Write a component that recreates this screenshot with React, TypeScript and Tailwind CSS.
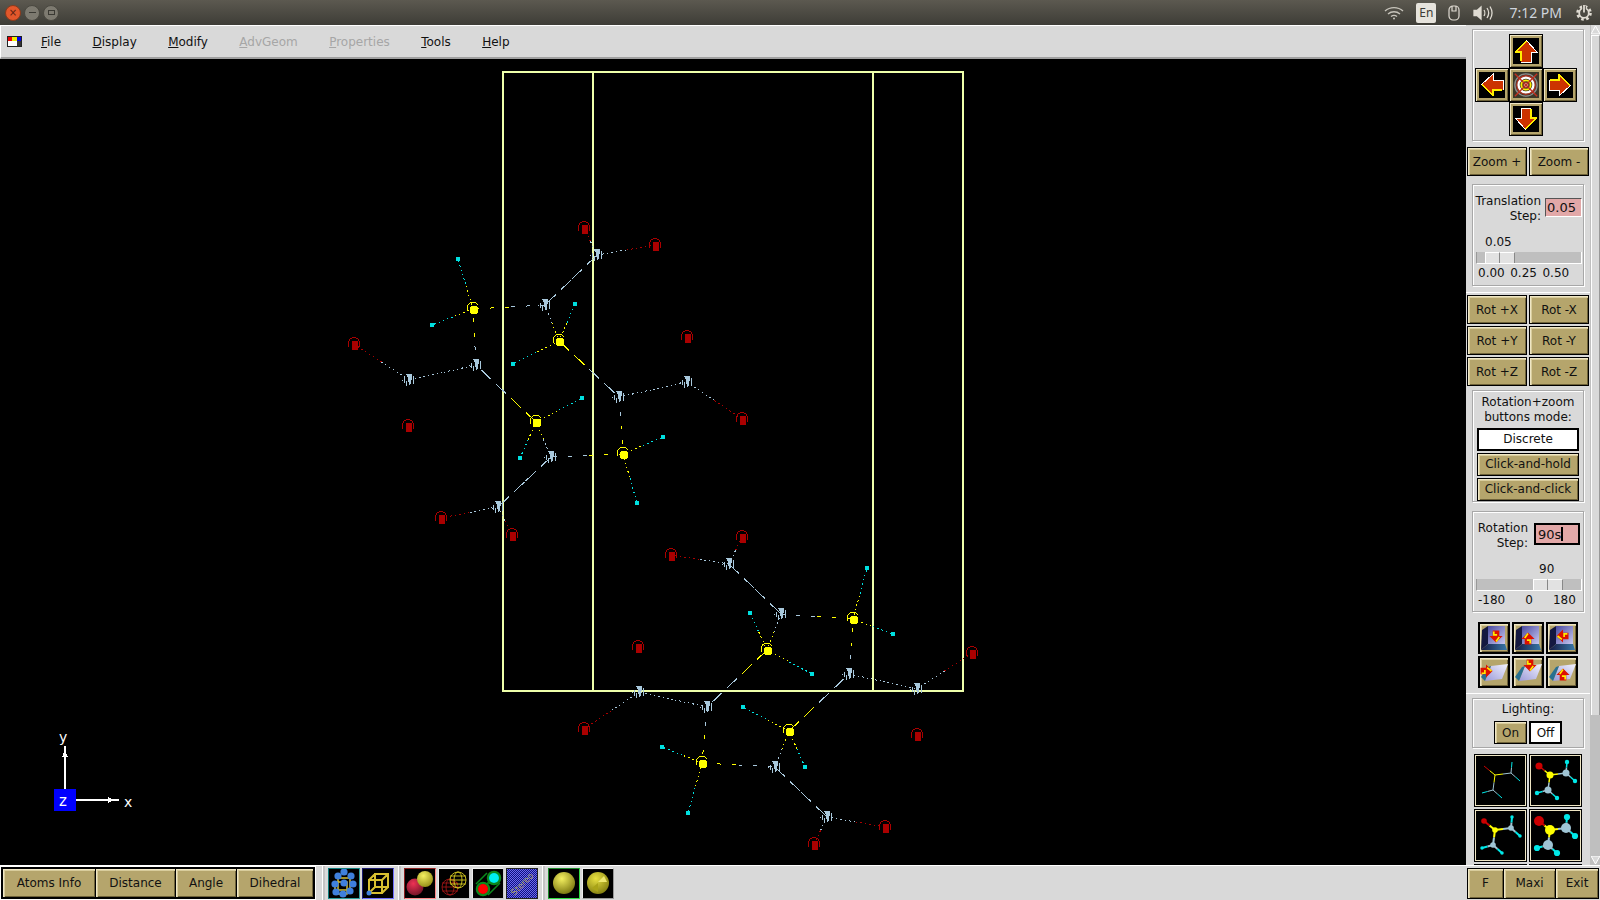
const btn = "flex items-center justify-center bg-[#b5a56c] border border-black shadow-[inset_1px_1px_0_#efe6c4,inset_2px_2px_0_#d8cc9c,inset_-1px_-1px_0_#6e6239] text-[#111]"
const frame = "mx-[6px] w-[112px] border border-[#a8a8a8] shadow-[1px_1px_0_#fff,inset_1px_1px_0_#fff]"

type Kind = "N" | "S" | "O" | "H"
const colors: Record<Kind, string> = { N: "#a8c8dc", S: "#ffff00", O: "#aa0000", H: "#00e0e0" }

const atoms: Record<string, [Kind, number, number]> = {
  a1: ["N", 597, 255], a2: ["N", 545, 305], a3: ["N", 476, 365], a4: ["N", 409, 380],
  a5: ["N", 619, 397], a6: ["N", 687, 382], a7: ["N", 551, 457], a8: ["N", 498, 507],
  s1: ["S", 473, 309], s2: ["S", 559, 341], s3: ["S", 536, 422], s4: ["S", 623, 454],
  h1: ["H", 458, 259], h2: ["H", 432, 325], h3: ["H", 575, 304], h4: ["H", 513, 364],
  h5: ["H", 582, 398], h6: ["H", 520, 458], h7: ["H", 663, 437], h8: ["H", 637, 503],
  o1: ["O", 584, 228], o2: ["O", 655, 245], o3: ["O", 687, 337], o4: ["O", 354, 344],
  o5: ["O", 408, 426], o6: ["O", 742, 419], o7: ["O", 441, 518], o8: ["O", 512, 535],
  b1: ["N", 729, 564], b2: ["N", 781, 614], b3: ["N", 849, 674], b4: ["N", 917, 689],
  b5: ["N", 639, 692], b6: ["N", 707, 707], b7: ["N", 775, 767], b8: ["N", 827, 817],
  t1: ["S", 853, 619], t2: ["S", 767, 650], t3: ["S", 789, 731], t4: ["S", 702, 763],
  k1: ["H", 867, 568], k2: ["H", 893, 634], k3: ["H", 750, 613], k4: ["H", 812, 674],
  k5: ["H", 743, 707], k6: ["H", 805, 767], k7: ["H", 662, 747], k8: ["H", 688, 813],
  p1: ["O", 742, 537], p2: ["O", 671, 555], p3: ["O", 638, 647], p4: ["O", 972, 653],
  p5: ["O", 917, 735], p6: ["O", 584, 729], p7: ["O", 885, 827], p8: ["O", 814, 844],
}

const bonds = [
  "o1-a1", "o2-a1", "a1-a2", "a2-s1", "a2-s2", "s2-h3", "s2-h4", "s2-a5", "a5-s4", "a5-a6", "a6-o6",
  "s4-h7", "s4-h8", "s4-a7", "a7-s3", "s3-h5", "s3-h6", "s3-a3", "a3-s1", "s1-h1", "s1-h2", "a3-a4",
  "a4-o4", "a7-a8", "a8-o7", "a8-o8",
  "p1-b1", "p2-b1", "b1-b2", "b2-t1", "b2-t2", "t2-k3", "t2-k4", "t2-b6", "b6-b5", "b5-p6", "b6-t4",
  "t4-k7", "t4-k8", "t4-b7", "b7-t3", "t3-k5", "t3-k6", "t3-b3", "b3-t1", "t1-k1", "t1-k2", "b3-b4",
  "b4-p4", "b7-b8", "b8-p7", "b8-p8",
]

// aliased GL lines break up differently depending on their slope
function dashFor(dx: number, dy: number) {
  const r = Math.min(Math.abs(dx), Math.abs(dy)) / Math.max(Math.abs(dx), Math.abs(dy))
  if (r < 0.1) return "4 11"
  if (r > 0.85) return "14 7"
  return "1.5 3"
}

function Atom({ kind, x, y }: { kind: Kind; x: number; y: number }) {
  const c = colors[kind]
  if (kind === "H") return <rect x={x - 2} y={y - 2} width={4} height={4} fill={c} />
  if (kind === "O")
    return (
      <g>
        <path d={`M${x - 5.5} ${y + 3}V${y - 1}A5.5 5.5 0 0 1 ${x + 5.5} ${y - 1}V${y + 3}`} fill="none" stroke={c} />
        <rect x={x - 2.5} y={y - 3} width={6} height={9} fill={c} />
      </g>
    )
  if (kind === "S")
    return (
      <g>
        <path d={`M${x - 6} ${y + 2}V${y - 1}A6 6 0 0 1 ${x + 5} ${y - 4}`} fill="none" stroke={c} />
        <circle cx={x + 1} cy={y + 1} r={4.5} fill={c} />
      </g>
    )
  return (
    <g fill={c}>
      <polygon points={`${x - 3},${y - 6} ${x + 3},${y - 6} ${x + 2},${y + 4} ${x},${y + 5} ${x - 1},${y - 2}`} />
      <rect x={x + 4} y={y - 4} width={1} height={8} />
      <rect x={x - 5} y={y - 2} width={1} height={5} />
      <rect x={x - 3} y={y + 1} width={1} height={5} />
      <rect x={x - 7} y={y} width={1} height={1} />
    </g>
  )
}

function Scene() {
  return (
    <svg width={1466} height={806} viewBox="0 59 1466 806" shapeRendering="crispEdges" className="block bg-black">
      <g stroke="#eeffaa" strokeWidth={2} fill="none">
        <rect x={503} y={72} width={460} height={619} />
        <path d="M593 72V691M873 72V691" />
      </g>
      {bonds.map(b => {
        const [from, to] = b.split("-")
        const [k1, x1, y1] = atoms[from]
        const [k2, x2, y2] = atoms[to]
        const mx = (x1 + x2) / 2
        const my = (y1 + y2) / 2
        const dash = dashFor(x2 - x1, y2 - y1)
        return (
          <g key={b} strokeDasharray={dash}>
            <line x1={x1} y1={y1} x2={mx} y2={my} stroke={colors[k1]} />
            <line x1={mx} y1={my} x2={x2} y2={y2} stroke={colors[k2]} />
          </g>
        )
      })}
      {Object.entries(atoms).map(([id, [k, x, y]]) => (
        <Atom key={id} kind={k} x={x} y={y} />
      ))}
      {/* axes */}
      <g fill="#fff">
        <rect x={64} y={746} width={2} height={43} />
        <polygon points="65,750 68,757 62,757" />
        <rect x={76} y={799} width={43} height={2} />
        <polygon points="115,800 108,797 108,803" />
        <rect x={54} y={789} width={22} height={22} fill="#0000ff" />
        <text x={59} y={806} fontFamily="'DejaVu Sans', sans-serif" fontSize={15}>z</text>
        <text x={59} y={742} fontFamily="'DejaVu Sans', sans-serif" fontSize={14}>y</text>
        <text x={124} y={807} fontFamily="'DejaVu Sans', sans-serif" fontSize={14}>x</text>
      </g>
    </svg>
  )
}

function Arrow({ rot }: { rot: number }) {
  return (
    <svg width={24} height={24} viewBox="0 0 24 24" style={{ transform: `rotate(${rot}deg)` }} shapeRendering="crispEdges">
      <polygon points="12,1 23,13 17,13 17,23 7,23 7,13 1,13" fill="#cc3300" />
      <path d="M12 2L2 13H7V22" fill="none" stroke="#ffee00" strokeWidth={1.5} />
      <path d="M12 1L23 13H17V23H7" fill="none" stroke="#fff" strokeWidth={1} />
    </svg>
  )
}

function Target() {
  return (
    <svg width={26} height={26} viewBox="0 0 28 28">
      <rect width={28} height={28} fill="#3a3828" />
      <circle cx={14} cy={14} r={12} fill="none" stroke="#8a8a8a" strokeWidth={1.5} />
      <circle cx={14} cy={14} r={10} fill="none" stroke="#b03020" strokeWidth={1.5} />
      <circle cx={14} cy={14} r={8} fill="none" stroke="#fff" strokeWidth={2.5} />
      <circle cx={14} cy={14} r={5} fill="none" stroke="#ffee00" strokeWidth={2} />
      <circle cx={14} cy={14} r={2.5} fill="#fff" stroke="#b03020" />
      <path d="M2 2L26 26M26 2L2 26" stroke="#c03020" strokeWidth={1.5} />
    </svg>
  )
}

function NavButton({ children }: { children: React.ReactNode }) {
  return (
    <div className="w-[34px] h-[34px] bg-[#b5a56c] border border-black shadow-[inset_1px_1px_0_#efe6c4,inset_-1px_-1px_0_#6e6239] p-[3px]">
      <div className="w-full h-full bg-black flex items-center justify-center overflow-hidden">{children}</div>
    </div>
  )
}

function PlaneButton({ arrow, type }: { arrow: [number, number, number]; type: "wall" | "slab" }) {
  const [ax, ay, rot] = arrow
  return (
    <div className={`${btn} w-[32px] h-[32px] border-2 p-0`}>
      <svg width={28} height={28} viewBox="0 0 28 28">
        <defs>
          <linearGradient id="pl" x1="0" y1="0" x2="1" y2="1">
            <stop offset="0" stopColor="#4a4aa0" />
            <stop offset="1" stopColor="#c8c8f0" />
          </linearGradient>
          <linearGradient id="pb" x1="0" y1="1" x2="1" y2="0">
            <stop offset="0" stopColor="#9a9ad8" />
            <stop offset="1" stopColor="#f4f4ff" />
          </linearGradient>
          <linearGradient id="pd" x1="0" y1="0" x2="1" y2="0">
            <stop offset="0" stopColor="#141840" />
            <stop offset="1" stopColor="#3878a8" />
          </linearGradient>
        </defs>
        {type === "wall" ? (
          <g>
            <rect x={8} y={2} width={17} height={18} fill="url(#pl)" />
            <polygon points="2,6 8,2 8,20 1,26" fill="#141840" />
            <polygon points="8,20 25,20 27,26 1,26" fill="url(#pd)" />
          </g>
        ) : (
          <g>
            <polygon points="11,8 28,6 22,21 5,23" fill="url(#pb)" />
            <polygon points="5,23 11,8 8,9 1,19" fill="#287090" />
          </g>
        )}
        <g transform={`translate(${ax} ${ay}) rotate(${rot}) scale(1.1)`}>
          <polygon points="0,-6 6,0 3,0 3,5 -3,5 -3,0 -6,0" fill="#dd1100" />
          <path d="M-3 -1L0 -5M-1 1H2V4" stroke="#ffee00" strokeWidth={1.5} fill="none" />
        </g>
      </svg>
    </div>
  )
}

const mol: { p: [number, number]; q: [number, number]; a: string; b: string }[] = [
  { p: [21, 21], q: [10, 12], a: "#ffff00", b: "#cc0000" },
  { p: [21, 21], q: [37, 19], a: "#ffff00", b: "#9fc4d4" },
  { p: [21, 21], q: [19, 36], a: "#ffff00", b: "#9fc4d4" },
  { p: [37, 19], q: [38, 8], a: "#9fc4d4", b: "#00e8e8" },
  { p: [37, 19], q: [46, 27], a: "#9fc4d4", b: "#00e8e8" },
  { p: [19, 36], q: [8, 39], a: "#9fc4d4", b: "#00e8e8" },
  { p: [19, 36], q: [28, 44], a: "#9fc4d4", b: "#00e8e8" },
]
const balls: [number, number, string, number][] = [
  [10, 12, "#cc0000", 1], [21, 21, "#ffff00", 1], [37, 19, "#9fc4d4", 1], [19, 36, "#9fc4d4", 1],
  [38, 8, "#00e8e8", 0.62], [46, 27, "#00e8e8", 0.62], [8, 39, "#00e8e8", 0.62], [28, 44, "#00e8e8", 0.62],
]

function MolTile({ line, ball }: { line: number; ball: number }) {
  return (
    <div className="w-[53px] h-[53px] shrink-0 bg-black border border-black shadow-[inset_0_0_0_1px_#efe6c4]">
      <svg width={51} height={51} viewBox="1 1 51 51" className="block">
        {mol.map((m, i) => {
          const mx = (m.p[0] + m.q[0]) / 2
          const my = (m.p[1] + m.q[1]) / 2
          return (
            <g key={i} strokeWidth={line}>
              <line x1={m.p[0]} y1={m.p[1]} x2={mx} y2={my} stroke={m.a} />
              <line x1={mx} y1={my} x2={m.q[0]} y2={m.q[1]} stroke={m.b} />
            </g>
          )
        })}
        {ball > 0 && balls.map(([x, y, c, f], i) => <circle key={i} cx={x} cy={y} r={ball * f} fill={c} />)}
      </svg>
    </div>
  )
}

function BottomTile({ edge, hi, children }: { edge: string; hi: string; children: React.ReactNode }) {
  return (
    <div className="w-[32px] h-[31px] bg-black border" style={{ borderColor: edge, borderBottomColor: hi, borderRightColor: hi }}>
      <svg width={30} height={29} viewBox="0 0 30 29" className="block">{children}</svg>
    </div>
  )
}

function Sphere({ id, cx, cy, r, from, to }: { id: string; cx: number; cy: number; r: number; from: string; to: string }) {
  return (
    <>
      <defs>
        <radialGradient id={id} cx="0.4" cy="0.3" r="0.8">
          <stop offset="0" stopColor={from} />
          <stop offset="1" stopColor={to} />
        </radialGradient>
      </defs>
      <circle cx={cx} cy={cy} r={r} fill={`url(#${id})`} />
    </>
  )
}

function Grip() {
  return <div className="w-[3px] h-full mx-[3.5px] bg-[#c4c4c4] border-l border-white" />
}

function Slider({ left }: { left: number }) {
  return (
    <div className="mx-[3px] w-[106px] h-[12px] flex bg-[#bfbfbf] border-r border-b border-white border-l border-l-[#999]">
      <div className="flex h-full" style={{ marginLeft: left }}>
        <div className="w-[15px] h-full bg-[#e2e2e2] border-t border-l border-white border-r border-r-[#888]" />
        <div className="w-[15px] h-full bg-[#e2e2e2] border-t border-white border-r border-r-[#888]" />
      </div>
    </div>
  )
}

export default function App() {
  return (
    <div className="w-[1600px] h-[900px] flex flex-col overflow-hidden bg-[#d9d9d9] text-[12px] text-[#111] font-['DejaVu_Sans',sans-serif]">
      {/* Title bar */}
      <div className="h-[25px] shrink-0 flex items-center bg-gradient-to-b from-[#5c5950] to-[#3e3d37] pl-[5px] pr-[8px]">
        <div className="flex gap-[3px]">
          <div className="w-[16px] h-[16px] rounded-full bg-[#e2572b] border border-[#8a3a1c] flex items-center justify-center text-[10px] leading-none text-[#5a2010]">×</div>
          <div className="w-[16px] h-[16px] rounded-full bg-[#7d7a70] border border-[#4a4840] flex items-center justify-center">
            <div className="w-[7px] h-px bg-[#3a3933]" />
          </div>
          <div className="w-[16px] h-[16px] rounded-full bg-[#7d7a70] border border-[#4a4840] flex items-center justify-center">
            <div className="w-[7px] h-[5px] border border-[#3a3933]" />
          </div>
        </div>
        <div className="ml-auto flex items-center text-[#dfdbd2]">
          <svg width={20} height={14} viewBox="0 0 20 14" fill="none" stroke="#c8c5bc" strokeWidth={1.4}>
            <path d="M1 5C6 0.5 14 0.5 19 5M4 8C7.5 5 12.5 5 16 8M7 10.5C9 9 11 9 13 10.5" />
            <circle cx={10} cy={12.5} r={1} fill="#c8c5bc" stroke="none" />
          </svg>
          <div className="ml-[12px] w-[20px] h-[20px] rounded-[2px] bg-[#e6e3dc] text-[#3c3b36] flex items-center justify-center text-[12px] font-['Noto_Sans',sans-serif]">En</div>
          <svg width={12} height={16} viewBox="0 0 12 16" fill="none" stroke="#dfdbd2" strokeWidth={1.2} className="ml-[12px]">
            <rect x={1} y={1} width={10} height={14} rx={4} />
            <path d="M4 1V6H8V1" />
          </svg>
          <svg width={20} height={16} viewBox="0 0 20 16" fill="none" stroke="#dfdbd2" strokeWidth={1.3} className="ml-[13px]">
            <path d="M1 5.5H4L8 2V14L4 10.5H1Z" fill="#dfdbd2" />
            <path d="M11 5C12 6.5 12 9.5 11 11M14 3C16 6 16 10 14 13M17 1.5C19.5 5.5 19.5 10.5 17 14.5" />
          </svg>
          <span className="ml-[16px] text-[14px] leading-none font-['Noto_Sans',sans-serif] text-[#cfd4dc]">7:12 PM</span>
          <svg width={16} height={17} viewBox="0 0 16 17" fill="none" stroke="#dfdbd2" className="ml-[14px]">
            <circle cx={8} cy={9} r={6.5} strokeWidth={2.6} strokeDasharray="2.6 2.5" />
            <circle cx={8} cy={9} r={4.8} strokeWidth={1.8} />
            <path d="M8 2V8.5" stroke="#46453e" strokeWidth={3.5} />
            <path d="M8 1V8.5" strokeWidth={1.8} />
          </svg>
        </div>
      </div>

      {/* Middle: menu + scene, right tool panel */}
      <div className="flex flex-1 min-h-0">
        <div className="w-[1466px] flex flex-col">
          <div className="h-[34px] shrink-0 flex items-center pl-[6px] border-t border-white border-l border-b-2 border-b-[#a0a0a0]">
            <div className="w-[15px] h-[11px] flex flex-wrap border border-[#222] bg-black mr-[19px]">
              <div className="w-[4px] h-[4px] bg-[#ee0000]" />
              <div className="w-[5px] h-[4px] bg-[#eeee00]" />
              <div className="w-[4px] h-[4px] bg-[#0000ee]" />
              <div className="w-[9px] h-[5px] bg-white" />
              <div className="w-[4px] h-[5px] bg-[#333]" />
            </div>
            <div className="flex gap-[31.4px]">
              <span><u>F</u>ile</span>
              <span><u>D</u>isplay</span>
              <span><u>M</u>odify</span>
              <span className="text-[#a6a6a6]"><u>A</u>dvGeom</span>
              <span className="text-[#a6a6a6]"><u>P</u>roperties</span>
              <span><u>T</u>ools</span>
              <span><u>H</u>elp</span>
            </div>
          </div>
          <Scene />
        </div>

        <div className="w-[124px] h-[840px] overflow-hidden flex flex-col">
          {/* Navigation pad */}
          <div className={`${frame} mt-[4px] h-[112px] flex flex-col items-center pt-[4px] pr-[4px] shrink-0`}>
            <NavButton><Arrow rot={0} /></NavButton>
            <div className="flex">
              <NavButton><Arrow rot={270} /></NavButton>
              <NavButton><Target /></NavButton>
              <NavButton><Arrow rot={90} /></NavButton>
            </div>
            <NavButton><Arrow rot={180} /></NavButton>
          </div>
          <div className="flex gap-[2px] pl-[1px] mt-[6px] shrink-0">
            <div className={`${btn} w-[60px] h-[29px]`}>Zoom +</div>
            <div className={`${btn} w-[60px] h-[29px]`}>Zoom -</div>
          </div>

          {/* Translation */}
          <div className={`${frame} mt-[8px] h-[102px] shrink-0 leading-[15px]`}>
            <div className="flex h-[43px]">
              <div className="w-[68px] pt-[9px] text-right">Translation<br />Step:</div>
              <div className="ml-[4px] mt-[13px] w-[37px] h-[19px] bg-[#e2a8a8] border-t border-l border-[#555] border-r border-r-white border-b border-b-white pl-[1px] flex items-center text-[13px]">0.05</div>
            </div>
            <div className="h-[15px] mt-[7px] pl-[12px]">0.05</div>
            <div className="mt-[2px]"><Slider left={8} /></div>
            <div className="mt-[2px] pl-[5px] flex gap-[5.5px]"><span>0.00</span><span>0.25</span><span>0.50</span></div>
          </div>

          <div className="h-px mt-[6px] bg-white shrink-0" />

          {/* Rotation buttons */}
          <div className="grid grid-cols-[60px_60px] gap-[2px] pl-[1px] mt-[2px] shrink-0">
            {["Rot +X", "Rot -X", "Rot +Y", "Rot -Y", "Rot +Z", "Rot -Z"].map(t => (
              <div key={t} className={`${btn} h-[29px]`}>{t}</div>
            ))}
          </div>

          {/* Button mode */}
          <div className={`${frame} mt-[4px] h-[112px] shrink-0 flex flex-col items-center leading-[15px] pt-[4px]`}>
            <div className="text-center">Rotation+zoom<br />buttons mode:</div>
            <div className="mt-[3px] w-[102px] h-[23px] bg-white border-2 border-black flex items-center justify-center">Discrete</div>
            <div className={`${btn} mt-[2px] w-[102px] h-[23px]`}>Click-and-hold</div>
            <div className={`${btn} mt-[2px] w-[102px] h-[23px]`}>Click-and-click</div>
          </div>

          {/* Rotation step */}
          <div className={`${frame} mt-[9px] h-[101px] shrink-0 leading-[15px]`}>
            <div className="flex h-[47px]">
              <div className="w-[55px] pt-[9px] text-right">Rotation<br />Step:</div>
              <div className="ml-[6px] mt-[11px] w-[46px] h-[22px] bg-[#e2a8a8] border-2 border-black flex items-center pl-[2px] text-[13px]">90s<span className="w-[2px] h-[14px] bg-black" /></div>
            </div>
            <div className="h-[15px] mt-[3px] pl-[66px]">90</div>
            <div className="mt-[2px]"><Slider left={56} /></div>
            <div className="mt-[2px] px-[5px] flex"><span>-180</span><span className="ml-[20px]">0</span><span className="ml-[20px]">180</span></div>
          </div>

          {/* View-plane buttons */}
          <div className="grid grid-cols-[32px_32px_32px] gap-[2px] pl-[12px] mt-[10px] shrink-0">
            <PlaneButton type="wall" arrow={[16, 12, 180]} />
            <PlaneButton type="wall" arrow={[14, 15, 0]} />
            <PlaneButton type="wall" arrow={[15, 12, 270]} />
            <PlaneButton type="slab" arrow={[6, 13, 90]} />
            <PlaneButton type="slab" arrow={[16, 7, 180]} />
            <PlaneButton type="slab" arrow={[15, 17, 0]} />
          </div>

          <div className="h-px mt-[5px] bg-white shrink-0" />

          {/* Lighting */}
          <div className={`${frame} mt-[4px] h-[50px] shrink-0 flex flex-col items-center`}>
            <div className="mt-[1px] leading-[19px]">Lighting:</div>
            <div className="mt-[2px] flex gap-[2px]">
              <div className={`${btn} w-[33px] h-[23px]`}>On</div>
              <div className="w-[33px] h-[23px] bg-white border-2 border-black flex items-center justify-center">Off</div>
            </div>
          </div>

          {/* Molecule style tiles */}
          <div className="grid grid-cols-[53px_53px] gap-[2px] pl-[8px] mt-[6px] shrink-0">
            <MolTile line={1} ball={0} />
            <MolTile line={1.5} ball={3.5} />
            <MolTile line={2} ball={2.8} />
            <MolTile line={2} ball={5} />
            <MolTile line={1} ball={0} />
            <MolTile line={1} ball={0} />
          </div>
        </div>

        {/* Panel scrollbar */}
        <div className="w-[10px] flex flex-col bg-[#bfbfbf] border-l border-[#bfbfbf]">
          <div className="h-[10px] bg-[#d9d9d9] flex items-center justify-center">
            <svg width={9} height={8} viewBox="0 0 9 8"><polygon points="4.5,0 9,8 0,8" fill="#d9d9d9" stroke="#fff" /></svg>
          </div>
          <div className="h-[680px] bg-[#d9d9d9] border-l border-t border-white border-r border-r-[#999]" />
          <div className="mt-auto h-[10px] flex items-center justify-center">
            <svg width={9} height={8} viewBox="0 0 9 8"><polygon points="0,0 9,0 4.5,8" fill="#d9d9d9" stroke="#fff" /></svg>
          </div>
        </div>
      </div>

      {/* Bottom bar */}
      <div className="h-[35px] shrink-0 flex items-center border-t border-white pl-[1px]">
        <div className="flex gap-[1px] bg-black border border-black p-[1px] shadow-[0_0_0_1px_#fff] mr-[3px]">
          <div className={`${btn} w-[92px] h-[28px] border-0`}>Atoms Info</div>
          <div className={`${btn} w-[79px] h-[28px] border-0`}>Distance</div>
          <div className={`${btn} w-[60px] h-[28px] border-0`}>Angle</div>
          <div className={`${btn} w-[76px] h-[28px] border-0`}>Dihedral</div>
        </div>
        <Grip />
        <div className="flex gap-[2px]">
          <BottomTile edge="#0d7c7c" hi="#2e9c9c">
            <g stroke="#d8c030" strokeWidth={1.5} fill="none">
              <path d="M9 9H21V21H9ZM6 13H18V25H6Z" />
            </g>
            <g fill="#3f80dd">
              {[[9, 7], [22, 7], [15, 14], [6, 15], [24, 15], [7, 23], [21, 22], [14, 25], [15, 3]].map(([x, y], i) => (
                <circle key={i} cx={x} cy={y} r={3.6} />
              ))}
            </g>
          </BottomTile>
          <BottomTile edge="#1a1a70" hi="#7070ff">
            <g stroke="#d8c030" strokeWidth={2} fill="none">
              <path d="M12 5H25V18H12ZM6 11H19V24H6ZM6 11L12 5M19 11L25 5M19 24L25 18M6 24L12 18" />
            </g>
            <circle cx={6} cy={24} r={2.5} fill="#3f80dd" />
          </BottomTile>
        </div>
        <Grip />
        <div className="flex gap-[2px]">
          <BottomTile edge="#8a2020" hi="#ff8888">
            <Sphere id="s1" cx={10} cy={18} r={8.5} from="#ee3355" to="#661122" />
            <Sphere id="s2" cx={20} cy={10} r={8} from="#f4f060" to="#8a8410" />
          </BottomTile>
          <BottomTile edge="#eeeeee" hi="#cccccc">
            <g fill="none" stroke="#b01818" strokeWidth={0.8}>
              <circle cx={11} cy={18} r={8} />
              <ellipse cx={11} cy={18} rx={4} ry={8} />
              <path d="M3 14H19M3 18H19M3 22H19" />
            </g>
            <g fill="none" stroke="#d8cc20" strokeWidth={0.9}>
              <circle cx={19} cy={11} r={8} />
              <ellipse cx={19} cy={11} rx={4} ry={8} />
              <path d="M11 7H27M11 11H27M11 15H27" />
            </g>
          </BottomTile>
          <BottomTile edge="#eeeeee" hi="#cccccc">
            <g fill="none" stroke="#0c8a1c" strokeWidth={2.5}>
              <circle cx={21} cy={9} r={6} />
              <circle cx={10} cy={20} r={6} />
              <path d="M14 14L17 14M3 15L14 4M15 26L27 14" strokeWidth={1.5} />
            </g>
            <circle cx={21} cy={9} r={5} fill="#00f0f0" />
            <circle cx={10} cy={20} r={5} fill="#ff0000" />
          </BottomTile>
          <BottomTile edge="#222" hi="#222">
            <defs>
              <pattern id="chk" width={2} height={2} patternUnits="userSpaceOnUse">
                <rect width={2} height={2} fill="#101080" />
                <rect width={1} height={1} fill="#6a6af0" />
                <rect x={1} y={1} width={1} height={1} fill="#6a6af0" />
              </pattern>
            </defs>
            <rect width={30} height={29} fill="url(#chk)" />
            <text x={15} y={18} textAnchor="middle" fontSize={8.5} fill="#a8a070" fontFamily="'DejaVu Sans', sans-serif" transform="rotate(-45 15 15)">Stereo</text>
          </BottomTile>
        </div>
        <Grip />
        <div className="flex gap-[2px]">
          <BottomTile edge="#1a8a2a" hi="#33dd44">
            <Sphere id="s3" cx={15} cy={14} r={11} from="#f4f060" to="#6e6a08" />
          </BottomTile>
          <BottomTile edge="#eeeeee" hi="#999999">
            <Sphere id="s4" cx={15} cy={14} r={11} from="#e8e040" to="#7a760c" />
            <polygon points="15,13 21,7 24,13" fill="#eee870" />
            <polygon points="15,14 9,19 15,23" fill="#aaa418" />
          </BottomTile>
        </div>
        <div className="ml-auto flex gap-[1px] bg-black p-[1px] mr-[1px]">
          <div className={`${btn} w-[35px] h-[29px] border-0`}>F</div>
          <div className={`${btn} w-[51px] h-[29px] border-0`}>Maxi</div>
          <div className={`${btn} w-[42px] h-[29px] border-0`}>Exit</div>
        </div>
      </div>
    </div>
  )
}
